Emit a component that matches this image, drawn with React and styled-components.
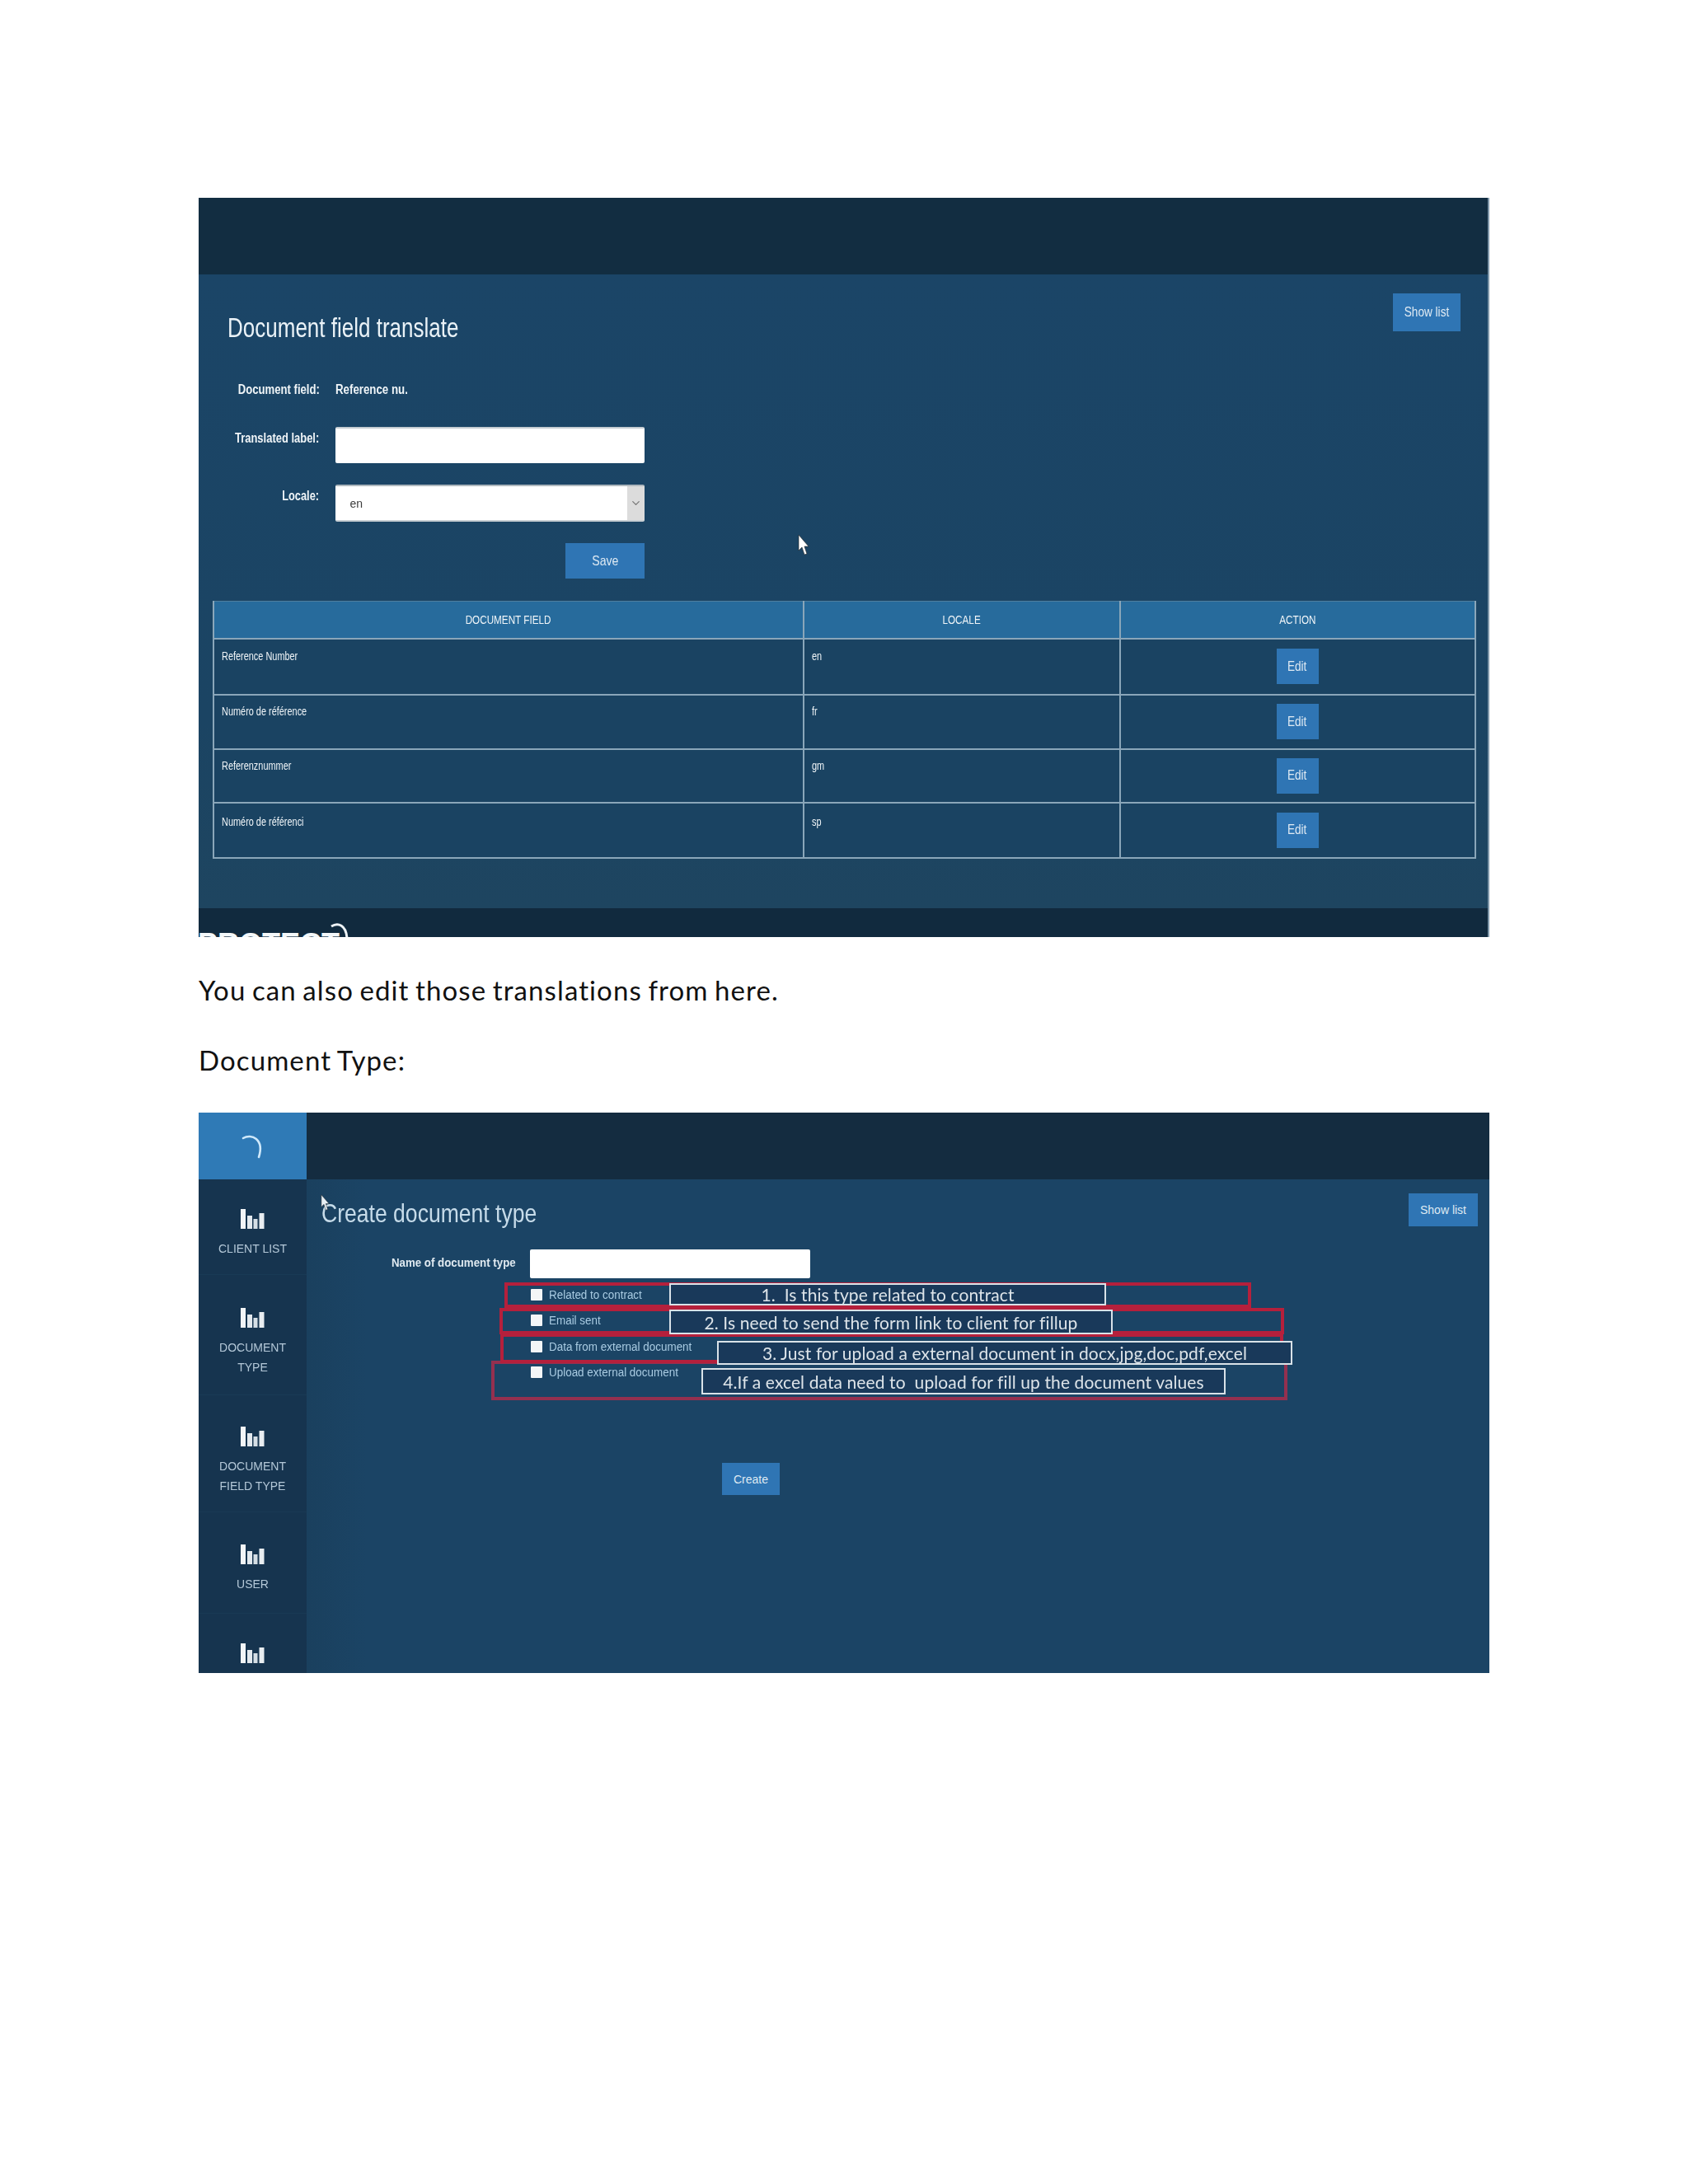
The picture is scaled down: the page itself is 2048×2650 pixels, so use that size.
import React from "react";
import styled, { createGlobalStyle } from "styled-components";
import { ChevronDown } from "lucide-react";

const Global = createGlobalStyle`
  html, body { margin: 0; padding: 0; background: #fff; }
  body { font-family: "Liberation Sans", Arial, sans-serif; }
  * { box-sizing: border-box; }
`;

const Page = styled.div`
  width: 2048px;
  height: 2650px;
  padding: 240px 241px 0 241px;
  background: #fff;
  overflow: hidden;
`;

const Fit = styled.span`
  display: inline-block;
  white-space: pre;
  transform: scaleX(${(p) => p.$sx || 1});
  transform-origin: ${(p) => p.$o || "left"} center;
`;

/* ---------- shared panel parts ---------- */
const Button = styled.div`
  display: flex;
  align-items: center;
  justify-content: center;
  flex: none;
  background: #2f75b4;
  color: #dfeaf3;
  font-size: ${(p) => p.$fs || 17}px;
  width: ${(p) => p.$w}px;
  height: ${(p) => p.$h}px;
`;

/* ---------- first panel ---------- */
const TranslatePanel = styled.section`
  position: relative;
  width: 1566px;
  height: 897px;
  display: flex;
  flex-direction: column;
  background: #1b4465;
  border-right: 2px solid #7f98aa;
  overflow: hidden;
`;
const DarkBar = styled.div`
  flex: none;
  height: 93px;
  background: #122d41;
`;
const TranslateMain = styled.div`
  position: relative;
  flex: 1;
  display: flex;
  flex-direction: column;
  padding: 23px 16px 0 18px;
  background: linear-gradient(#1b4567, #1b4463 70%, #1e4560);
  filter: blur(0.5px);
  color: #f0f5f8;
`;
const TitleRow = styled.div`
  display: flex;
  justify-content: space-between;
  align-items: flex-start;
  height: 103px;
  padding: 0 17px;
`;
const PageTitle = styled.h1`
  margin: 23px 0 0;
  font-size: 34px;
  line-height: 36px;
  font-weight: 400;
  color: #eaf2f7;
`;
const FieldForm = styled.div`
  display: grid;
  grid-template-columns: 128.5px 375.5px;
  column-gap: 19px;
  row-gap: 26px;
`;
const FieldLabel = styled.div`
  text-align: right;
  font-size: 16px;
  font-weight: 700;
  line-height: ${(p) => p.$lh || 27}px;
  white-space: nowrap;
`;
const FieldValue = styled.div`
  height: 33px;
  font-size: 16px;
  font-weight: 700;
  line-height: 28px;
`;
const TextInput = styled.input`
  display: block;
  width: 100%;
  height: ${(p) => p.$h}px;
  border: 0;
  border-top: 2px solid #c4ccd2;
  border-radius: 2px;
  background: #fff;
  padding: 0;
`;
const SelectBox = styled.div`
  display: flex;
  height: 45px;
  background: #fff;
  border-top: 2px solid #aeb7bd;
  border-bottom: 2px solid #c7ced3;
  border-radius: 2px;
  overflow: hidden;
`;
const SelectText = styled.div`
  flex: 1;
  padding-left: 18px;
  font-size: 14px;
  line-height: 42px;
  color: #3d3d3d;
`;
const SelectArrow = styled.div`
  width: 21px;
  display: flex;
  align-items: center;
  justify-content: center;
  background: #dcdcdc;
  color: #777;
`;
const SaveCell = styled.div`
  grid-column: 2;
  display: flex;
  justify-content: flex-end;
`;
const TranslationTable = styled.table`
  margin: 27px 0 0 -1.5px;
  width: 1531px;
  border-collapse: collapse;
  table-layout: fixed;
  color: #f0f5f8;
`;
const HeadCell = styled.th`
  height: 45px;
  padding: 0;
  background: #276b9c;
  border: 2px solid #8aa6b9;
  border-top: 1px solid #4f7f9f;
  font-size: 15px;
  font-weight: 400;
  text-align: center;
`;
const BodyCell = styled.td`
  height: ${(p) => p.$h}px;
  padding: ${(p) => p.$pt || 10}px 0 0 9px;
  vertical-align: top;
  background: #1a4362;
  border: 2px solid #8aa6b9;
  font-size: 14px;
  line-height: 20px;
`;
const ActionCell = styled(BodyCell)`
  padding: 0;
  vertical-align: middle;
`;
const EditWrap = styled.div`
  display: flex;
  justify-content: center;
`;
const Pointer = styled.svg`
  position: absolute;
  left: ${(p) => p.$x}px;
  top: ${(p) => p.$y}px;
`;
const LogoFooter = styled.div`
  position: relative;
  flex: none;
  height: 35px;
  background: #112a3e;
  overflow: hidden;
`;
const ClippedBrand = styled.div`
  position: absolute;
  left: -1px;
  top: 26px;
  font-size: 36px;
  line-height: 36px;
  font-weight: 700;
  color: #f4f8fa;
  white-space: nowrap;
`;
const FooterArc = styled.svg`
  position: absolute;
  left: 159px;
  top: 17px;
`;

/* ---------- paragraphs ---------- */
const BodyText = styled.p`
  margin: ${(p) => p.$mt}px 0 0;
  font-family: Lato, "Open Sans", sans-serif;
  font-size: 33px;
  line-height: 40px;
  color: #111;
  letter-spacing: 1.1px;
  word-spacing: -2px;
`;

/* ---------- second panel ---------- */
const CreatePanel = styled.section`
  width: 1566px;
  height: 680px;
  margin-top: 44px;
  display: grid;
  grid-template-columns: 131px 1fr;
  overflow: hidden;
  background: #1b4465;
`;
const Sidebar = styled.aside`
  display: flex;
  flex-direction: column;
  background: #16344f;
  overflow: hidden;
`;
const LogoBlock = styled.div`
  flex: none;
  height: 81px;
  display: flex;
  align-items: center;
  justify-content: center;
  background: #2f7ab6;
  filter: blur(0.5px);
`;
const NavItem = styled.div`
  flex: none;
  height: ${(p) => p.$h}px;
  padding-top: ${(p) => p.$top}px;
  display: flex;
  flex-direction: column;
  align-items: center;
  border-bottom: 1px solid #193a55;
  filter: blur(0.7px);
`;
const NavLabel = styled.div`
  margin-top: 12px;
  font-size: 14px;
  line-height: 24px;
  color: #b4c8d8;
  text-align: center;
  white-space: nowrap;
`;
const CreateColumn = styled.div`
  display: flex;
  flex-direction: column;
  min-width: 0;
`;
const DarkTop = styled.div`
  flex: none;
  height: 81px;
  background: #142c40;
`;
const CreateMain = styled.div`
  position: relative;
  flex: 1;
  padding: 17px 14px 0 18px;
  background: linear-gradient(90deg, #1a405e, #1b4465 5%);
  color: #c9dce8;
`;
const CreateHead = styled.div`
  display: flex;
  justify-content: space-between;
  align-items: flex-start;
  height: 68px;
  filter: blur(0.7px);
`;
const CreateTitle = styled.h2`
  margin: 6px 0 0;
  font-size: 32px;
  line-height: 36px;
  font-weight: 400;
  color: #c6dbe9;
`;
const TypeForm = styled.div`
  display: grid;
  grid-template-columns: 236px 340px;
  column-gap: 17px;
  filter: blur(0.6px);
`;
const NameLabel = styled.div`
  text-align: right;
  font-size: 14px;
  font-weight: 700;
  line-height: 32px;
  color: #dfe9f0;
  white-space: nowrap;
`;
const NameInput = styled(TextInput)`
  border-top: 0;
`;
const OptionList = styled.div`
  grid-column: 2;
  margin-top: 4px;
  display: flex;
  flex-direction: column;
`;
const OptionRow = styled.label`
  height: 31.5px;
  display: flex;
  align-items: center;
  gap: 8px;
  font-size: 14px;
  color: #a9cbe2;
  white-space: nowrap;
`;
const CheckBox = styled.input.attrs({ type: "checkbox" })`
  appearance: none;
  flex: none;
  width: 14px;
  height: 14px;
  margin: 0 0 0 1px;
  background: #f4f6f7;
  border-radius: 1px;
`;
const CreateCell = styled.div`
  grid-column: 2;
  margin: 94px 0 0 233px;
`;
const Annotations = styled.div`
  position: absolute;
  inset: 0;
  pointer-events: none;
  filter: blur(0.6px);
`;
const RedFrame = styled.div`
  position: absolute;
  left: ${(p) => p.$x}px;
  top: ${(p) => p.$y}px;
  width: ${(p) => p.$w}px;
  height: ${(p) => p.$h}px;
  border: 4px solid ${(p) => p.$c || "#b5203c"};
`;
const NoteBox = styled.div`
  position: absolute;
  left: ${(p) => p.$x}px;
  top: ${(p) => p.$y}px;
  width: ${(p) => p.$w}px;
  height: ${(p) => p.$h}px;
  display: flex;
  align-items: center;
  justify-content: center;
  border: 2px solid #d9e2e8;
  background: #19395a;
  color: #dde4e9;
  font-family: Lato, "Open Sans", sans-serif;
  font-size: 21px;
  letter-spacing: 0.1px;
  white-space: pre;
`;

/* ---------- drawings ---------- */
const Bars = () => (
  <svg width="29" height="24" viewBox="0 0 29 24">
    <rect x="0" y="0" width="6" height="24" fill="#f2f5f7" />
    <rect x="8" y="8" width="6" height="16" fill="#e3e9ee" />
    <rect x="15.500" y="12" width="5" height="12" fill="#d5dee5" />
    <rect x="22.500" y="5" width="6" height="19" fill="#e8edf1" />
  </svg>
);

const CursorArrow = ({ x, y, w = 14, h = 26, fill = "#fff" }) => (
  <Pointer $x={x} $y={y} width={w} height={h} viewBox="0 0 14 26">
    <path d="M1 1 L1 20 L5 16 L8 25 L11 24 L8 15 L13 15 Z" fill={fill} stroke="#222" strokeWidth="0.6" />
  </Pointer>
);

const rows = [
  ["Reference Number", "en", 68, 10],
  ["Numéro de référence", "fr", 66, 9],
  ["Referenznummer", "gm", 65, 9],
  ["Numéro de référenci", "sp", 67, 12],
];

const navItems = [
  { lines: ["CLIENT LIST"], h: 116, top: 36 },
  { lines: ["DOCUMENT", "TYPE"], h: 146, top: 40 },
  { lines: ["DOCUMENT", "FIELD TYPE"], h: 142, top: 38 },
  { lines: ["USER"], h: 123, top: 39 },
  { lines: [], h: 90, top: 36 },
];

const options = [
  "Related to contract",
  "Email sent",
  "Data from external document",
  "Upload external document",
];

const frames = [
  { x: 224, y: 220, w: 966, h: 48, c: "#94304f" },
  { x: 240, y: 125, w: 906, h: 31 },
  { x: 234, y: 156, w: 952, h: 32 },
  { x: 235, y: 187, w: 950, h: 36 },
];

const notes = [
  { x: 440, y: 126, w: 530, h: 27, t: "1.  Is this type related to contract" },
  { x: 440, y: 158, w: 538, h: 30, t: "2. Is need to send the form link to client for fillup" },
  { x: 498, y: 196, w: 698, h: 29, t: "3. Just for upload a external document in docx,jpg,doc,pdf,excel" },
  { x: 479, y: 229, w: 636, h: 32, t: "4.If a excel data need to  upload for fill up the document values" },
];

export default function App() {
  return (
    <Page>
      <Global />
      <TranslatePanel>
        <DarkBar />
        <TranslateMain>
          <TitleRow>
            <PageTitle><Fit $sx={0.765}>Document field translate</Fit></PageTitle>
            <Button $w={82} $h={46}><Fit $sx={0.8} $o="center">Show list</Fit></Button>
          </TitleRow>
          <FieldForm>
            <FieldLabel $lh={28}><Fit $sx={0.82} $o="right">Document field:</Fit></FieldLabel>
            <FieldValue><Fit $sx={0.83}>Reference nu.</Fit></FieldValue>
            <FieldLabel><Fit $sx={0.81} $o="right">Translated label:</Fit></FieldLabel>
            <TextInput $h={44} aria-label="Translated label" />
            <FieldLabel><Fit $sx={0.8} $o="right">Locale:</Fit></FieldLabel>
            <SelectBox>
              <SelectText>en</SelectText>
              <SelectArrow><ChevronDown size={15} strokeWidth={2} /></SelectArrow>
            </SelectBox>
            <SaveCell><Button $w={96} $h={43}><Fit $sx={0.83} $o="center">Save</Fit></Button></SaveCell>
          </FieldForm>
          <TranslationTable>
            <colgroup>
              <col width="716" />
              <col width="384" />
              <col width="431" />
            </colgroup>
            <thead>
              <tr>
                <HeadCell><Fit $sx={0.78} $o="center">DOCUMENT FIELD</Fit></HeadCell>
                <HeadCell><Fit $sx={0.78} $o="center">LOCALE</Fit></HeadCell>
                <HeadCell><Fit $sx={0.78} $o="center">ACTION</Fit></HeadCell>
              </tr>
            </thead>
            <tbody>
              {rows.map(([name, loc, h, pt]) => (
                <tr key={name}>
                  <BodyCell $h={h} $pt={pt}><Fit $sx={0.78}>{name}</Fit></BodyCell>
                  <BodyCell $h={h} $pt={pt}><Fit $sx={0.78}>{loc}</Fit></BodyCell>
                  <ActionCell $h={h}>
                    <EditWrap><Button $w={51} $h={43}><Fit $sx={0.8} $o="center">Edit</Fit></Button></EditWrap>
                  </ActionCell>
                </tr>
              ))}
            </tbody>
          </TranslationTable>
          <CursorArrow x={727} y={315} />
        </TranslateMain>
        <LogoFooter>
          <ClippedBrand>PROTECT</ClippedBrand>
          <FooterArc width="24" height="20" viewBox="0 0 24 20">
            <path d="M2 5 C 10 0, 20 3, 21 20" fill="none" stroke="#eef3f6" strokeWidth="3" />
          </FooterArc>
        </LogoFooter>
      </TranslatePanel>

      <BodyText $mt={44}>You can also edit those translations from here.</BodyText>
      <BodyText $mt={45}>Document Type:</BodyText>

      <CreatePanel>
        <Sidebar>
          <LogoBlock>
            <svg width="32" height="34" viewBox="0 0 32 34">
              <path d="M4 7 C 14 1, 30 8, 23 30" fill="none" stroke="#cfe9fb" strokeWidth="2.600" strokeLinecap="round" />
            </svg>
          </LogoBlock>
          {navItems.map((item, i) => (
            <NavItem key={i} $h={item.h} $top={item.top}>
              <Bars />
              {item.lines.length > 0 && (
                <NavLabel>{item.lines.map((l) => <div key={l}>{l}</div>)}</NavLabel>
              )}
            </NavItem>
          ))}
        </Sidebar>
        <CreateColumn>
          <DarkTop />
          <CreateMain>
            <CreateHead>
              <CreateTitle><Fit $sx={0.83}>Create document type</Fit></CreateTitle>
              <Button $w={84} $h={40} $fs={14}>Show list</Button>
            </CreateHead>
            <TypeForm>
              <NameLabel><Fit $sx={0.95} $o="right">Name of document type</Fit></NameLabel>
              <NameInput $h={35} aria-label="Name of document type" />
              <OptionList>
                {options.map((o) => (
                  <OptionRow key={o}><CheckBox /><Fit $sx={0.96}>{o}</Fit></OptionRow>
                ))}
              </OptionList>
              <CreateCell><Button $w={70} $h={39} $fs={14}>Create</Button></CreateCell>
            </TypeForm>
            <Annotations>
              {frames.map((f) => <RedFrame key={f.y} $x={f.x} $y={f.y} $w={f.w} $h={f.h} $c={f.c} />)}
              {notes.map((n) => <NoteBox key={n.y} $x={n.x} $y={n.y} $w={n.w} $h={n.h}>{n.t}</NoteBox>)}
            </Annotations>
            <CursorArrow x={17} y={18} w={11} h={20} fill="#e8f0f5" />
          </CreateMain>
        </CreateColumn>
      </CreatePanel>
    </Page>
  );
}
